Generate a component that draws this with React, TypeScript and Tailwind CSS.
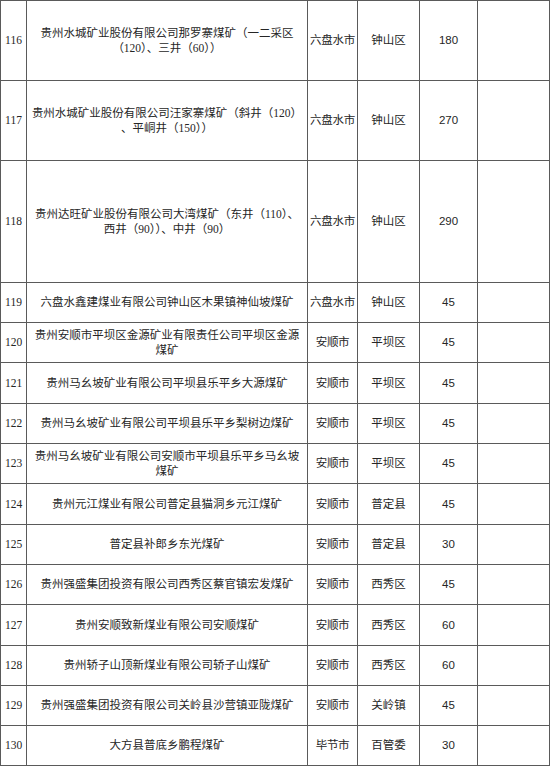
const rows: { no: string; name: string[]; city: string; county: string; cap: string; h: string }[] = [
  { no: "116", name: ["贵州水城矿业股份有限公司那罗寨煤矿（一二采区", "（120）、三井（60））"], city: "六盘水市", county: "钟山区", cap: "180", h: "h-[80px]" },
  { no: "117", name: ["贵州水城矿业股份有限公司汪家寨煤矿（斜井（120）", "、平峒井（150））"], city: "六盘水市", county: "钟山区", cap: "270", h: "h-[80px]" },
  { no: "118", name: ["贵州达旺矿业股份有限公司大湾煤矿（东井（110）、", "西井（90））、中井（90）"], city: "六盘水市", county: "钟山区", cap: "290", h: "h-[122px]" },
  { no: "119", name: ["六盘水鑫建煤业有限公司钟山区木果镇神仙坡煤矿"], city: "六盘水市", county: "钟山区", cap: "45", h: "h-[40px]" },
  { no: "120", name: ["贵州安顺市平坝区金源矿业有限责任公司平坝区金源", "煤矿"], city: "安顺市", county: "平坝区", cap: "45", h: "h-[40px]" },
  { no: "121", name: ["贵州马幺坡矿业有限公司平坝县乐平乡大源煤矿"], city: "安顺市", county: "平坝区", cap: "45", h: "h-[41px]" },
  { no: "122", name: ["贵州马幺坡矿业有限公司平坝县乐平乡梨树边煤矿"], city: "安顺市", county: "平坝区", cap: "45", h: "h-[40px]" },
  { no: "123", name: ["贵州马幺坡矿业有限公司安顺市平坝县乐平乡马幺坡", "煤矿"], city: "安顺市", county: "平坝区", cap: "45", h: "h-[40px]" },
  { no: "124", name: ["贵州元江煤业有限公司普定县猫洞乡元江煤矿"], city: "安顺市", county: "普定县", cap: "45", h: "h-[41px]" },
  { no: "125", name: ["普定县补郎乡东光煤矿"], city: "安顺市", county: "普定县", cap: "30", h: "h-[40px]" },
  { no: "126", name: ["贵州强盛集团投资有限公司西秀区蔡官镇宏发煤矿"], city: "安顺市", county: "西秀区", cap: "45", h: "h-[40px]" },
  { no: "127", name: ["贵州安顺致新煤业有限公司安顺煤矿"], city: "安顺市", county: "西秀区", cap: "60", h: "h-[41px]" },
  { no: "128", name: ["贵州轿子山顶新煤业有限公司轿子山煤矿"], city: "安顺市", county: "西秀区", cap: "60", h: "h-[40px]" },
  { no: "129", name: ["贵州强盛集团投资有限公司关岭县沙营镇亚陇煤矿"], city: "安顺市", county: "关岭镇", cap: "45", h: "h-[40px]" },
  { no: "130", name: ["大方县普底乡鹏程煤矿"], city: "毕节市", county: "百管委", cap: "30", h: "h-[40px]" },
];

const cell = "border border-[#5a5a5a] text-center align-middle p-0";

export default function App() {
  return (
    <div className="w-[550px] h-[768px] bg-white overflow-hidden text-[#262626] font-['Liberation_Serif','Noto_Sans_CJK_SC',serif] text-[11.5px] leading-[15px]">
      <table className="border-collapse table-fixed w-[549px]">
        <colgroup>
          <col className="w-[26px]" />
          <col className="w-[281px]" />
          <col className="w-[50px]" />
          <col className="w-[62px]" />
          <col className="w-[58px]" />
          <col className="w-[72px]" />
        </colgroup>
        <tbody>
          {rows.map((r) => (
            <tr key={r.no}>
              <td className={`${cell} ${r.h}`}>{r.no}</td>
              <td className={`${cell} whitespace-nowrap`}>
                {r.name.map((line, i) => (
                  <div key={i}>{line}</div>
                ))}
              </td>
              <td className={`${cell} whitespace-nowrap tracking-[-0.3px]`}>{r.city}</td>
              <td className={cell}>{r.county}</td>
              <td className={`${cell} font-['Liberation_Sans',sans-serif]`}>{r.cap}</td>
              <td className={cell}></td>
            </tr>
          ))}
        </tbody>
      </table>
    </div>
  );
}
